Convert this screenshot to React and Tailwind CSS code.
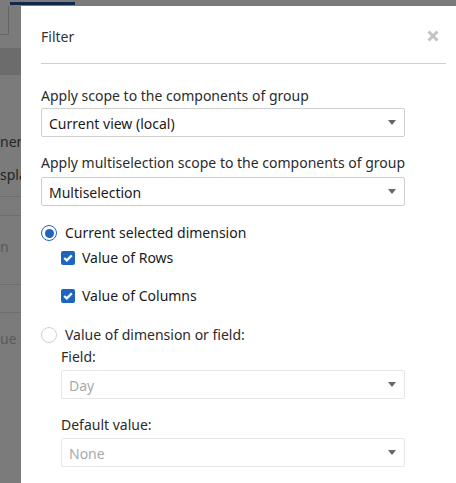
import React from "react";

function Caret() {
  return (
    <svg width="8" height="5" viewBox="0 0 8 5" className="shrink-0">
      <path d="M0 0 L8 0 L4 5 Z" fill="#666" />
    </svg>
  );
}

function Select({ value, disabled }) {
  return (
    <div
      className={`flex h-[29px] items-center justify-between rounded-[2px] border pl-[7px] pr-[8px] ${
        disabled ? "border-[#e6e6e6] text-[#aaa]" : "border-[#cfcfcf] text-[#1a1a1a]"
      }`}
    >
      <span className="pt-[3px]">{value}</span>
      <Caret />
    </div>
  );
}

function Radio({ checked }) {
  return checked ? (
    <span className="flex h-[16px] w-[16px] shrink-0 items-center justify-center rounded-full border-[1.5px] border-[#1f65bd] bg-white">
      <span className="h-[9px] w-[9px] rounded-full bg-[#1f65bd]" />
    </span>
  ) : (
    <span className="h-[16px] w-[16px] shrink-0 rounded-full border border-[#cfcfcf] bg-white" />
  );
}

function Check() {
  return (
    <span className="flex h-[14px] w-[14px] shrink-0 items-center justify-center rounded-[2px] bg-[#1f65bd]">
      <svg width="10" height="8" viewBox="0 0 10 8">
        <path d="M1.2 4 L3.8 6.4 L8.8 1.4" stroke="#fff" strokeWidth="2.2" fill="none" />
      </svg>
    </span>
  );
}

export default function App() {
  return (
    <div
      className="relative h-[483px] w-[456px] overflow-hidden bg-[#7b7b7b] text-[14px] text-[#2b2b2b]"
      style={{ fontFamily: '"Noto Sans", "Open Sans", sans-serif' }}
    >
      {/* dimmed page behind the dialog */}
      <div className="ml-[10px] mt-[2px] h-[3px] w-[65px] bg-[#10294a]" />
      <div className="mt-[1px] h-[29px] w-[9px] border-b border-r border-[#666]" />
      <div className="mt-[13px] h-[27px] w-full bg-[#6c6c6c]" />
      <div className="mt-[57px] leading-[20px] text-[#262626]">
        <div>nen</div>
        <div className="mt-[13px]">spla</div>
      </div>
      <div className="mt-[11px] h-px w-full bg-[#6e6e6e]" />
      <div className="mt-[18px] h-px w-full bg-[#6e6e6e]" />
      <div className="mt-[21px] leading-[20px] text-[#5a5a5a]">n</div>
      <div className="mt-[27px] h-px w-full bg-[#6e6e6e]" />
      <div className="mt-[27px] h-px w-full bg-[#6e6e6e]" />
      <div className="mt-[16px] leading-[20px] text-[#5a5a5a]">ue t</div>

      {/* dialog */}
      <div className="absolute bottom-0 left-[21px] right-0 top-[6px] bg-white pl-[20px] pr-[10px]">
        <div className="flex h-[58px] items-center justify-between border-b border-[#cfcfcf]">
          <span className="pt-[4px] text-[#333]">Filter</span>
          <svg width="12" height="12" viewBox="0 0 12 12" className="mr-[7px] mt-[2px]">
            <path d="M1.5 1.5 L10.5 10.5 M10.5 1.5 L1.5 10.5" stroke="#c4c4c4" strokeWidth="3" />
          </svg>
        </div>

        <div className="w-[364px] leading-[20px]">
          <div className="mt-[22px] mb-[2px]">Apply scope to the components of group</div>
          <Select value="Current view (local)" />

          <div className="mt-[16px] mb-[4px]">Apply multiselection scope to the components of group</div>
          <Select value="Multiselection" />

          <div className="mt-[17px] flex items-center gap-[8px]">
            <Radio checked />
            <span className="text-[#1a1a1a]">Current selected dimension</span>
          </div>
          <div className="ml-[20px] mt-[5px] flex items-center gap-[7px]">
            <Check />
            <span className="text-[#1a1a1a]">Value of Rows</span>
          </div>
          <div className="ml-[20px] mt-[18px] flex items-center gap-[7px]">
            <Check />
            <span className="text-[#1a1a1a]">Value of Columns</span>
          </div>

          <div className="mt-[19px] flex items-center gap-[8px]">
            <Radio />
            <span className="text-[#2b2b2b]">Value of dimension or field:</span>
          </div>
          <div className="ml-[20px]">
            <div className="mt-[2px] mb-[3px]">Field:</div>
            <Select value="Day" disabled />
            <div className="mt-[16px] mb-[3px]">Default value:</div>
            <Select value="None" disabled />
          </div>
        </div>
      </div>
    </div>
  );
}
